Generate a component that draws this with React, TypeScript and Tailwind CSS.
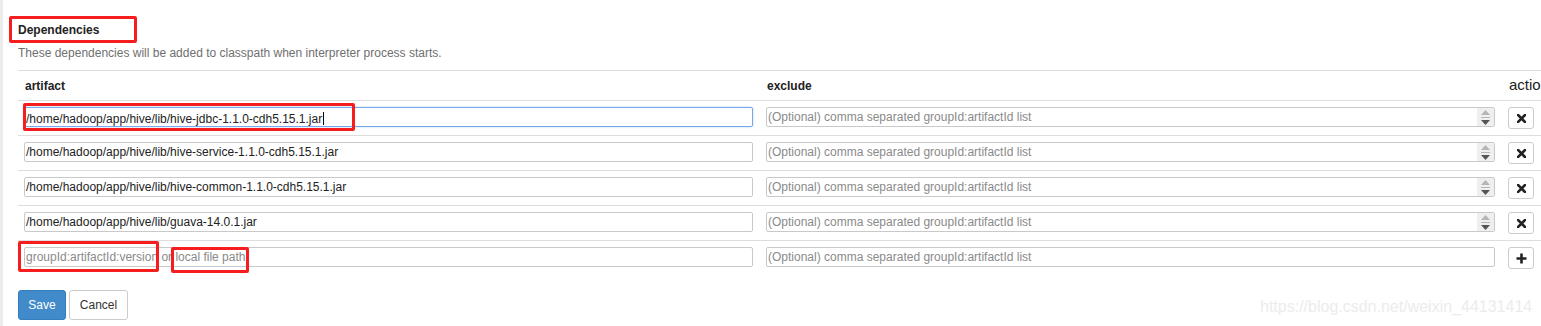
import React from "react";

const ROWS = [
  "/home/hadoop/app/hive/lib/hive-jdbc-1.1.0-cdh5.15.1.jar",
  "/home/hadoop/app/hive/lib/hive-service-1.1.0-cdh5.15.1.jar",
  "/home/hadoop/app/hive/lib/hive-common-1.1.0-cdh5.15.1.jar",
  "/home/hadoop/app/hive/lib/guava-14.0.1.jar",
];

const EXCLUDE_HINT = "(Optional) comma separated groupId:artifactId list";

function Spinner() {
  // little up/down box at the right of the exclude field
  return (
    <div className="flex h-full w-[17px] flex-col items-center justify-center gap-[2px] bg-[#efefef]">
      <svg width="9" height="5" viewBox="0 0 9 5">
        <path d="M4.5 0 L9 5 L0 5 Z" fill="#b5b5b5" />
      </svg>
      <div className="h-px w-[9px] bg-[#b5b5b5]" />
      <svg width="9" height="5" viewBox="0 0 9 5">
        <path d="M0 0 L9 0 L4.5 5 Z" fill="#555" />
      </svg>
    </div>
  );
}

function Field({ value, placeholder, focused, spinner }: { value?: string; placeholder?: string; focused?: boolean; spinner?: boolean }) {
  return (
    <div
      className={
        "flex h-[20px] w-[729px] items-center overflow-hidden rounded-[2px] border bg-white " +
        (focused ? "border-[#7aa7e8] shadow-[0_0_2px_rgba(102,175,233,0.6)]" : "border-[#c9c9c9]")
      }
    >
      <div className="flex-1 whitespace-nowrap pl-px text-[12px] leading-none">
        {value ? (
          <span className="text-[#222]">
            {value}
            {focused && <span className="ml-px inline-block h-[13px] w-px translate-y-[2px] bg-black" />}
          </span>
        ) : (
          <span className="text-[#8a8a8a]">{placeholder}</span>
        )}
      </div>
      {spinner && <Spinner />}
    </div>
  );
}

function IconBtn({ kind }: { kind: "remove" | "add" }) {
  return (
    <div className="flex h-[22px] w-[26px] items-center justify-center rounded-[3px] border border-[#ccc] bg-white">
      {kind === "remove" ? (
        <svg width="9" height="9" viewBox="0 0 9 9">
          <path d="M1 1 L8 8 M8 1 L1 8" stroke="#222" strokeWidth="2.6" strokeLinecap="square" />
        </svg>
      ) : (
        <svg width="11" height="11" viewBox="0 0 11 11">
          <path d="M5.5 0.5 V10.5 M0.5 5.5 H10.5" stroke="#222" strokeWidth="2.6" />
        </svg>
      )}
    </div>
  );
}

function Row({ children }: { children: React.ReactNode }) {
  return <div className="grid h-[35px] grid-cols-[742px_741px_80px] border-t border-[#ddd]">{children}</div>;
}

export default function App() {
  return (
    <div
      className="relative flex h-[326px] w-[1541px] overflow-hidden bg-white text-[#333]"
      style={{ fontFamily: '"Liberation Sans", Arial, sans-serif' }}
    >
      <div className="w-[3px] shrink-0 bg-[#ececec]" />
      <div className="pl-[15px] pt-[23px]">
        <h3 className="text-[12px] font-bold leading-[14px] text-[#222]">Dependencies</h3>
        <p className="mt-[9px] text-[12px] leading-[14px] text-[#6f6f6f]">
          These dependencies will be added to classpath when interpreter process starts.
        </p>

        <div className="mt-[10px] w-[1563px]">
          <div className="grid h-[30px] grid-cols-[742px_741px_80px] items-center border-t border-[#ddd] text-[12px] font-bold text-[#222]">
            <div className="pl-[7px]">artifact</div>
            <div className="pl-[7px]">exclude</div>
            <div className="pl-[8px] text-[15px] font-normal">action</div>
          </div>

          {ROWS.map((r, i) => (
            <Row key={r}>
              <div className="pl-[6px] pt-[6px]">
                <Field value={r} focused={i === 0} />
              </div>
              <div className="pl-[6px] pt-[6px]">
                <Field placeholder={EXCLUDE_HINT} spinner />
              </div>
              <div className="pl-[7px] pt-[6px]">
                <IconBtn kind="remove" />
              </div>
            </Row>
          ))}

          <Row>
            <div className="pl-[6px] pt-[6px]">
              <Field placeholder="groupId:artifactId:version or local file path" />
            </div>
            <div className="pl-[6px] pt-[6px]">
              <Field placeholder={EXCLUDE_HINT} />
            </div>
            <div className="pl-[7px] pt-[6px]">
              <IconBtn kind="add" />
            </div>
          </Row>
        </div>

        <div className="mt-[15px] flex gap-[3px]">
          <button className="h-[30px] w-[48px] rounded-[3px] border border-[#357ebd] bg-[#428bca] text-[12px] text-white">
            Save
          </button>
          <button className="h-[30px] w-[59px] rounded-[3px] border border-[#ccc] bg-white text-[12px] text-[#333]">
            Cancel
          </button>
        </div>
      </div>

      {/* annotation boxes drawn over the screenshot */}
      <div className="pointer-events-none absolute left-[9px] top-[16px] h-[27px] w-[128px] rounded-[2px] border-[3px] border-[#f51d1d]" />
      <div className="pointer-events-none absolute left-[23px] top-[103px] h-[28px] w-[332px] rounded-[2px] border-[3px] border-[#f51d1d]" />
      <div className="pointer-events-none absolute left-[18px] top-[241px] h-[31px] w-[141px] rounded-[2px] border-[3px] border-[#f51d1d]" />
      <div className="pointer-events-none absolute left-[171px] top-[247px] h-[26px] w-[78px] rounded-[2px] border-[3px] border-[#f51d1d]" />

      <div className="pointer-events-none absolute left-[1260px] top-[298px] whitespace-nowrap text-[16px] leading-[18px] text-[#ececec]">
        https://blog.csdn.net/weixin_44131414
      </div>
    </div>
  );
}
